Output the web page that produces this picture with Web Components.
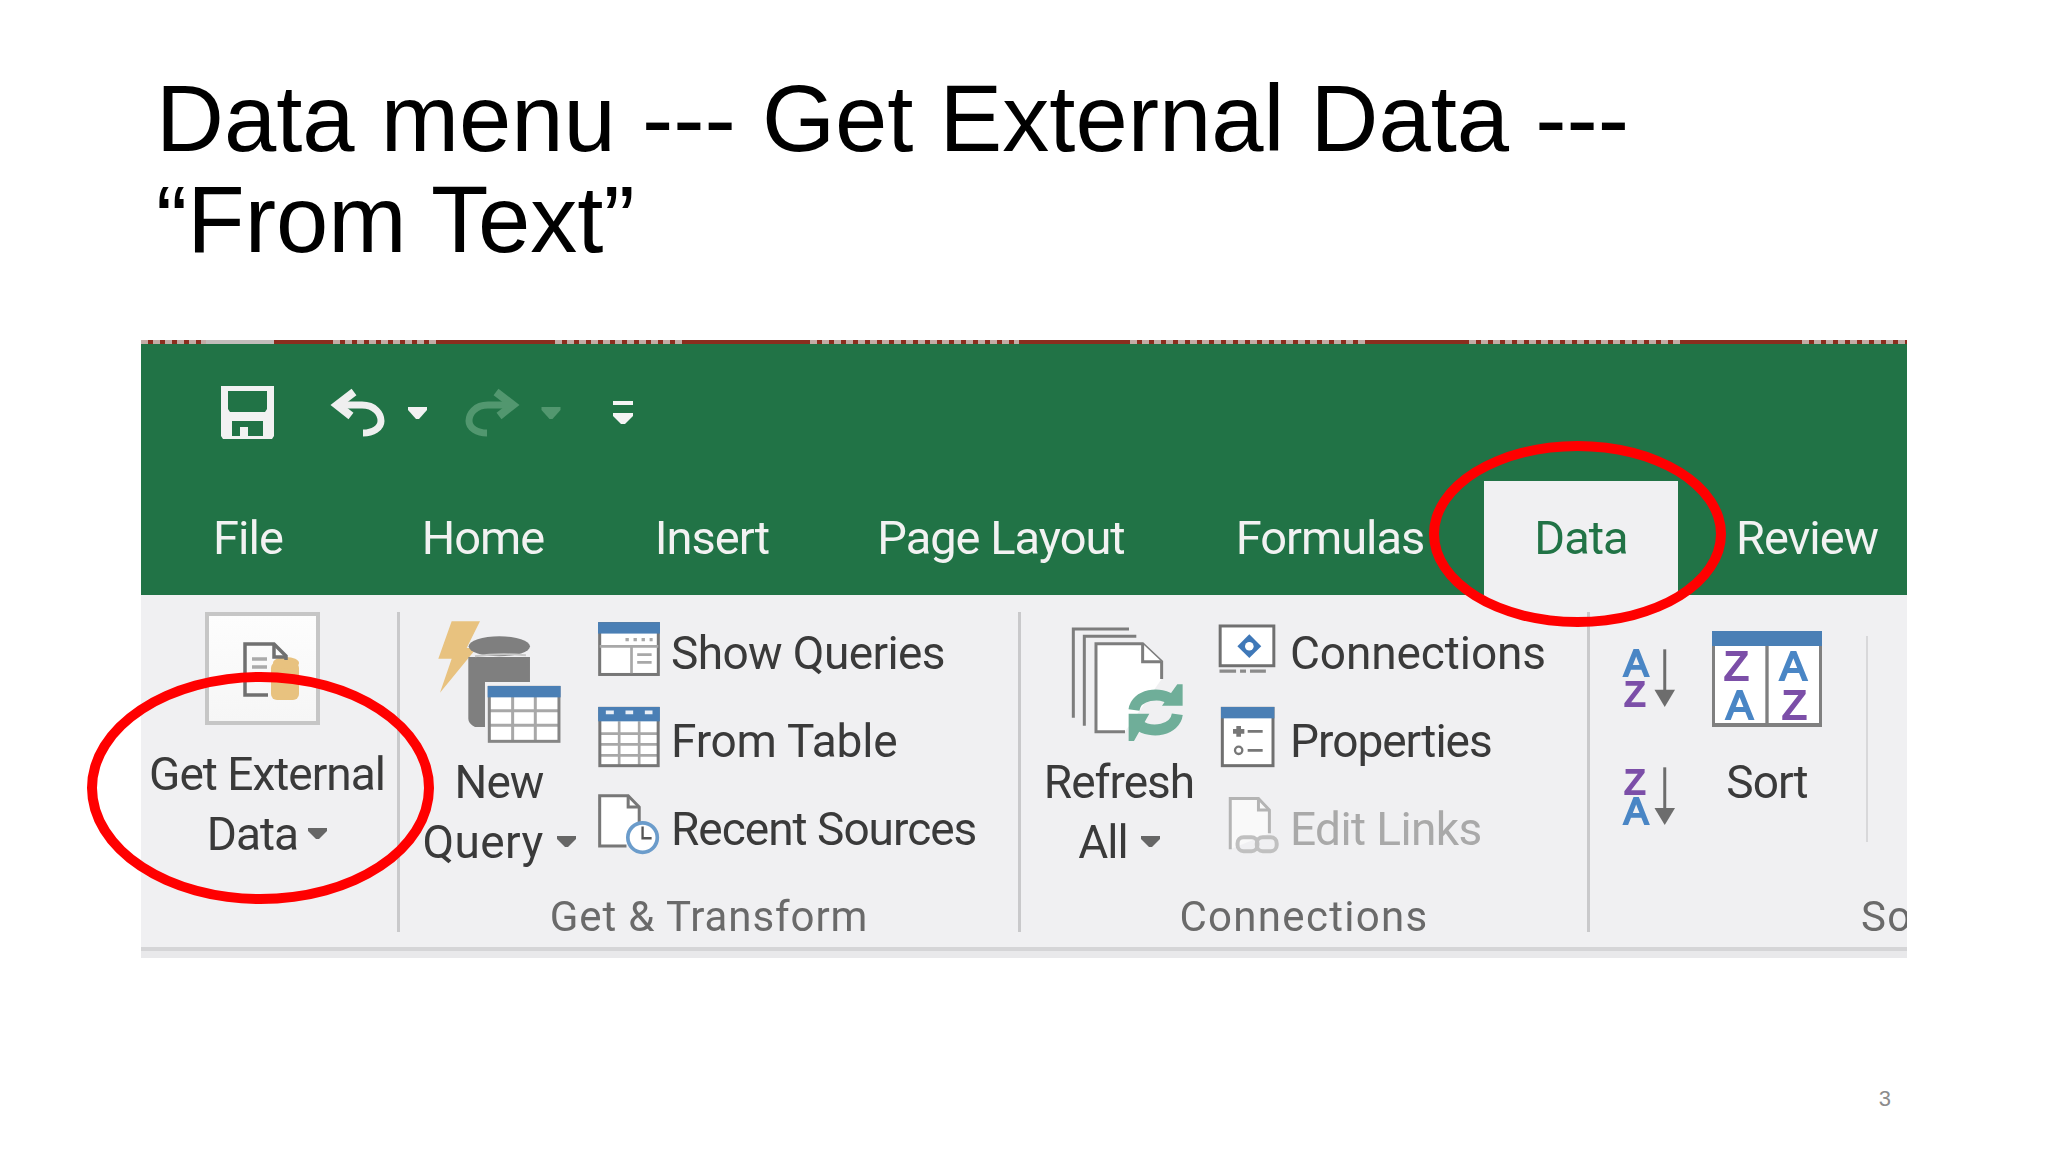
<!DOCTYPE html>
<html lang="en"><head><meta charset="utf-8"><title>Data menu</title>
<style>html,body{margin:0;padding:0;background:#fff;}</style></head>
<body>
<slide-page>
  <slide-title>Data menu --- Get External Data ---<br>“From Text”</slide-title>
  <excel-ribbon>
    <rb-band></rb-band>
    <rb-qat></rb-qat>
    <rb-tabs>
      <rb-tab style="--w:227px;--pr:13px">File</rb-tab>
      <rb-tab style="--w:230px">Home</rb-tab>
      <rb-tab style="--w:228px">Insert</rb-tab>
      <rb-tab style="--w:350px">Page Layout</rb-tab>
      <rb-tab style="--w:308px">Formulas</rb-tab>
      <rb-tab active style="--w:194px">Data</rb-tab>
      <rb-tab style="--w:229px;--pl:29px">Review</rb-tab>
    </rb-tabs>
    <rb-body>
      <rb-group style="--w:256px">
        <rb-big style="--bw:256px;--ih:132px;--tr:4px">
          <rb-launch slot="icon"></rb-launch>
          Get External<br>Data<rb-caret style="margin-left:10px"></rb-caret>
        </rb-big>
      </rb-group>
      <rb-sep></rb-sep>
      <rb-group style="--w:618px">
        <rb-big style="--bw:198px;--ih:140px;--it:-2px;--ir:5px">
          <rb-icon slot="icon" name="query"></rb-icon>
          New<br><span style="letter-spacing:.4px">Query</span><rb-caret></rb-caret>
        </rb-big>
        <rb-stack>
          <rb-cmd><rb-icon slot="icon" name="queries"></rb-icon>Show Queries</rb-cmd>
          <rb-cmd style="letter-spacing:-.2px"><rb-icon slot="icon" name="table"></rb-icon>From Table</rb-cmd>
          <rb-cmd style="letter-spacing:-1px"><rb-icon slot="icon" name="recent"></rb-icon>Recent Sources</rb-cmd>
        </rb-stack>
        <span slot="label" style="letter-spacing:.9px">Get &amp; Transform</span>
      </rb-group>
      <rb-sep></rb-sep>
      <rb-group style="--w:566px">
        <rb-big style="--bw:196px;--ih:140px;--it:3px;--il:5px">
          <rb-icon slot="icon" name="refresh"></rb-icon>
          Refresh<br>All<rb-caret></rb-caret>
        </rb-big>
        <rb-stack>
          <rb-cmd style="letter-spacing:-.1px"><rb-icon slot="icon" name="conn"></rb-icon>Connections</rb-cmd>
          <rb-cmd style="letter-spacing:-1px"><rb-icon slot="icon" name="props"></rb-icon>Properties</rb-cmd>
          <rb-cmd disabled><rb-icon slot="icon" name="links"></rb-icon>Edit Links</rb-cmd>
        </rb-stack>
        <span slot="label">Connections</span>
      </rb-group>
      <rb-sep></rb-sep>
      <rb-group style="--w:317px;--lp:271px;--la:left">
        <rb-sortcol>
          <rb-icon name="az"></rb-icon>
          <rb-icon name="za"></rb-icon>
        </rb-sortcol>
        <rb-big style="--bw:156px;--ih:140px;--it:19px">
          <rb-icon slot="icon" name="sort"></rb-icon>
          Sort
        </rb-big>
        <rb-sep thin></rb-sep>
        <span slot="label">So</span>
      </rb-group>
    </rb-body>
  </excel-ribbon>
  <slide-number>3</slide-number>
  <ring-mark style="--x:87px;--y:672px;--w:347px;--h:232px"></ring-mark>
  <ring-mark style="--x:1429px;--y:441px;--w:297px;--h:186px"></ring-mark>
</slide-page>
<script>
const UI='"Roboto","Noto Sans",sans-serif';
function def(name,css,html,init){
  customElements.define(name,class extends HTMLElement{
    constructor(){super();const r=this.attachShadow({mode:'open'});
      r.innerHTML='<style>'+css+'</style>'+html;}
    connectedCallback(){if(init)init(this);}
  });
}
const BLUE='#4a7fb5',G='#777',GL='#a8a8a8',Y='#e8c27f',PUR='#7c4fa8',AB='#4a86c5';
const AZ=(x,y,c,s,t)=>`<text x="${x}" y="${y}" fill="${c}" font-family="Liberation Sans" font-size="${s}" stroke="${c}" stroke-width="6">${t}</text>`;
const ICONS={
 save:{w:53,h:53,vb:'0 0 53 53',b:`<path fill="#f2f2f2" fill-rule="evenodd" d="M0 0H53V50L51 53H2L0 50ZM7 5V23L9 26H44L46 23V5ZM11 35V50H19V41H27V50H42V35Z"/>`},
 undo:{w:55,h:49,vb:'0 0 55 49',b:`<g fill="none" stroke="#efefef"><path stroke-width="8" d="M24 4 7 17 21 28"/><path stroke-width="7" d="M8 17H32C45 17 51 26 51 33 51 40 43 45 33 45"/></g>`},
 redo:{w:55,h:49,vb:'0 0 55 49',b:`<g fill="none" stroke="#52976f" transform="translate(55 0) scale(-1 1)"><path stroke-width="8" d="M24 4 7 17 21 28"/><path stroke-width="7" d="M8 17H32C45 17 51 26 51 33 51 40 43 45 33 45"/></g>`},
 caretw:{w:19,h:12,vb:'0 0 19 12',b:`<path fill="#f2f2f2" d="M0 0H19V3L11 12H8L0 3Z"/>`},
 caretd:{w:20,h:12,vb:'0 0 19 12',b:`<path fill="#52976f" d="M0 0H19V3L11 12H8L0 3Z"/>`},
 custom:{w:20,h:23,vb:'0 0 20 23',b:`<path fill="#f4f4f4" d="M0 0H20V4H0ZM0 12H20V15L12 23H8L0 15Z"/>`},
 query:{w:133.3,h:131.7,vb:'0 0 400 395',b:`
   <path fill="${Y}" d="M65 28H150L110 108H140L30 242 65 140H25Z"/>
   <path fill="#7f7f7f" d="M115 135H300V210H165V345H135Q115 335 115 320Z"/><ellipse cx="208" cy="103" rx="92" ry="30" fill="#7f7f7f"/>
   <path fill="none" stroke="#c8c8c8" stroke-width="6" d="M135 133Q208 122 288 130"/>
   <rect x="178" y="226" width="209" height="162" fill="#fff"/>
   <path fill="none" stroke="#a8a8a8" stroke-width="9" d="M248 255V388M316 255V388M178 296H387M178 340H387"/>
   <rect x="178" y="226" width="209" height="162" fill="none" stroke="#858585" stroke-width="9"/>
   <rect x="173" y="222" width="219" height="34" fill="${BLUE}"/>`},
 queries:{w:62,h:54,vb:'505 38 185 160',b:`
   <rect x="510" y="42" width="175" height="152" fill="#fff" stroke="${G}" stroke-width="9"/>
   <rect x="505" y="38" width="185" height="34" fill="${BLUE}"/>
   <path stroke="#a8a8a8" stroke-width="8" fill="none" d="M510 110H685M605 110V190M622 135H665M622 158H665"/>
   <path stroke="#a8a8a8" stroke-width="10" stroke-dasharray="10 14" fill="none" d="M587 90H668"/>`},
 table:{w:62,h:60,vb:'505 290 185 180',b:`
   <rect x="510" y="294" width="175" height="172" fill="#fff"/>
   <path stroke="#a8a8a8" stroke-width="8" fill="none" d="M568 333V466M628 333V466M510 370H685M510 402H685M510 435H685"/>
   <rect x="510" y="294" width="175" height="172" fill="none" stroke="${G}" stroke-width="9"/>
   <rect x="505" y="290" width="185" height="43" fill="${BLUE}"/>
   <path stroke="#e8eef6" stroke-width="11" fill="none" d="M528 306H552M587 306H610M645 306H668"/>`},
 recent:{w:62,h:62,vb:'505 553 185 185',b:`
   <path fill="#fff" stroke="${G}" stroke-width="9" d="M590 708H510V558H595L628 592V640"/>
   <path fill="none" stroke="${G}" stroke-width="9" d="M595 558V592H628"/>
   <circle cx="638" cy="683" r="44" fill="#fff" stroke="#6b9ccb" stroke-width="11"/>
   <path fill="none" stroke="#555" stroke-width="7" d="M638 650V685H665"/>`},
 refresh:{w:123.3,h:128.3,vb:'0 0 370 385',b:`
   <path fill="none" stroke="#7d7d7d" stroke-width="9" d="M40 308V42H207M73 332V64H229"/>
   <path fill="#fff" stroke="#7d7d7d" stroke-width="9" d="M195 350H108V86H248L305 140V192"/>
   <path fill="#fff" stroke="#7d7d7d" stroke-width="9" d="M248 86V140H305"/>
   <g fill="none" stroke="#6fae99" stroke-width="33">
     <path d="M222 285C228 240 300 225 340 258"/>
     <path d="M352 298C346 345 275 360 234 328"/></g>
   <path fill="#6fae99" d="M352 208H368V272H306ZM206 296H268L222 378H206Z"/>`},
 conn:{w:60,h:53,vb:'465 20 180 160',b:`
   <rect x="474" y="29" width="162" height="120" fill="#fff" stroke="#707070" stroke-width="9"/>
   <path fill="#3f78b8" d="M562 54 598 90 562 126 526 90Z"/><circle cx="562" cy="90" r="13" fill="#fff"/>
   <path fill="none" stroke="#8b8b8b" stroke-width="10" d="M472 165H522M534 165H552M564 165H612"/>`},
 props:{w:60,h:60,vb:'470 275 180 180',b:`
   <rect x="486" y="279" width="152" height="172" fill="#fff" stroke="#707070" stroke-width="9"/>
   <rect x="482" y="275" width="160" height="34" fill="${BLUE}"/>
   <path fill="none" stroke="#777" stroke-width="8" d="M562 348H607M562 405H607"/>
   <path fill="#777" d="M528 332H542V341H552V355H542V364H528V355H518V341H528Z"/>
   <circle cx="535" cy="405" r="11" fill="#fff" stroke="#777" stroke-width="7"/>`},
 links:{w:63,h:60,vb:'470 545 190 180',b:`
   <path fill="#f9f9f9" stroke="#b4b4b4" stroke-width="9" d="M510 708V555H595L628 590V660"/>
   <path fill="none" stroke="#b4b4b4" stroke-width="9" d="M595 555V590H628"/>
   <g fill="none" stroke="#c0c0c0" stroke-width="12"><rect x="532" y="672" width="60" height="42" rx="18"/><rect x="590" y="672" width="60" height="42" rx="18"/></g>`},
 az:{w:52,h:59,vb:'40 84 155 178',b:AZ(41,168,AB,112,'A')+AZ(43,258,PUR,105,'Z')+`
   <path fill="none" stroke="#6d6d6d" stroke-width="9" d="M165 88V225"/><path fill="#6d6d6d" d="M134 210H196L165 262Z"/>`},
 za:{w:52,h:59,vb:'40 438 155 178',b:AZ(43,522,PUR,105,'Z')+AZ(41,612,AB,112,'A')+`
   <path fill="none" stroke="#6d6d6d" stroke-width="9" d="M165 442V580"/><path fill="#6d6d6d" d="M134 565H196L165 616Z"/>`},
 sort:{w:110,h:96,vb:'310 30 330 288',b:`
   <rect x="310" y="30" width="330" height="288" fill="#808080"/>
   <rect x="319" y="70" width="151" height="236" fill="#fff"/><rect x="480" y="70" width="151" height="236" fill="#fff"/>
   <rect x="310" y="30" width="330" height="45" fill="${BLUE}"/>`
   +AZ(346,178,PUR,122,'Z')+AZ(352,295,AB,122,'A')+AZ(513,178,AB,122,'A')+AZ(520,295,PUR,122,'Z')},
};
def('rb-icon',':host{display:block;line-height:0}svg{display:block;overflow:visible}','<svg xmlns="http://www.w3.org/2000/svg"></svg>',el=>{
  const i=ICONS[el.getAttribute('name')],s=el.shadowRoot.querySelector('svg');
  s.setAttribute('width',i.w);s.setAttribute('height',i.h);s.setAttribute('viewBox',i.vb);s.innerHTML=i.b;
});
def('slide-page',':host{display:block;position:relative;width:2048px;height:1152px;overflow:hidden;background:#fff}','<slot></slot>');
def('slide-title',':host{display:block;padding:68px 0 0 156px;font:94px/101px "Liberation Sans",Arial,sans-serif;color:#000;white-space:nowrap}','<slot></slot>');
def('slide-number',`:host{display:block;padding:128px 157px 0 0;text-align:right;font:22px/26px "Liberation Sans",sans-serif;color:#8c8c8c}`,'<slot></slot>');
def('ring-mark',`:host{position:absolute;left:var(--x);top:var(--y);width:var(--w);height:var(--h);box-sizing:border-box;border:10px solid #f00;border-radius:50%;pointer-events:none}`,'');
def('excel-ribbon',`:host{display:block;margin:70px 0 0 141px;width:1766px;border-bottom:7px solid #e9e9eb;overflow:hidden;font:46px/60px ${UI};letter-spacing:-1px;color:#3a3a3a;filter:blur(.55px)}`,'<slot></slot>');
const RED='#8a2d1e',DOT='repeating-linear-gradient(90deg,#c4aca6 0 7px,'+RED+' 7px 12px)';
const SEG=[[65,DOT],[68,'#c2bdbb'],[59,RED],[104,DOT],[118,RED],[131,DOT],[124,RED],[209,DOT],[111,RED],[235,DOT],[104,RED],[216,DOT],[117,RED],[105,DOT]];
def('rb-band',':host{display:flex;height:4px}i{display:block;height:4px}',SEG.map(s=>`<i style="width:${s[0]}px;background:${s[1]}"></i>`).join(''));
def('rb-qat',`:host{display:flex;align-items:center;height:137px;background:#217346;padding-left:80px;box-sizing:border-box}
 .a{margin-left:56px}.b{margin-left:23px}.c{margin-left:38px}.d{margin-left:52px}.e{margin-left:21px}`,
 `<rb-icon name="save"></rb-icon><rb-icon class="a" name="undo"></rb-icon><rb-icon class="b" name="caretw"></rb-icon><rb-icon class="c" name="redo"></rb-icon><rb-icon class="e" name="caretd"></rb-icon><rb-icon class="d" name="custom"></rb-icon>`);
def('rb-tabs',':host{display:flex;height:114px;background:#217346}','<slot></slot>');
def('rb-tab',`:host{display:block;box-sizing:border-box;width:var(--w);height:114px;padding:27px var(--pr,0) 0 var(--pl,0);text-align:center;font-size:47px;color:#f2f2f2;white-space:nowrap}
 :host([active]){background:#f0f0f2;color:#217346}`,'<slot></slot>');
def('rb-body',`:host{display:flex;box-sizing:content-box;height:335px;padding-top:17px;background:#f0f0f2;border-bottom:4px solid #d5d5d7}`,'<slot></slot>');
def('rb-group',`:host{display:flex;flex-direction:column;width:var(--w);height:335px;flex:none;overflow:hidden}
 .c{display:flex;flex:1;align-items:flex-start}
 .l{height:44px;margin-bottom:8px;font-size:42px;line-height:44px;letter-spacing:1.3px;color:#6a6a6a;white-space:nowrap;text-align:var(--la,center);padding-left:var(--lp,0)}`,
 '<div class="c"><slot></slot></div><div class="l"><slot name="label"></slot></div>');
def('rb-sep',`:host{display:block;flex:none;width:3px;height:320px;background:#c9c9cb}
 :host([thin]){width:2px;height:206px;margin:24px 0 0 21px;background:#d8d8da}`,'');
def('rb-big',`:host{display:block;flex:none;width:var(--bw)}
 .i{display:flex;justify-content:center;align-items:flex-start;height:var(--ih);box-sizing:border-box;padding-top:var(--it,0);padding-left:var(--il,0);padding-right:var(--ir,0)}
 .t{text-align:center;white-space:nowrap;padding-right:var(--tr,0)}`,'<div class="i"><slot name="icon"></slot></div><div class="t"><slot></slot></div>');
def('rb-launch',`:host{display:block;box-sizing:border-box;width:115px;height:113px;margin-right:13px;border:4px solid #c6c6c6;background:linear-gradient(#fdfdfd,#f6f6f6)}svg{display:block}`,
 `<svg width="107" height="105" viewBox="0 0 107 105">
  <rect x="62" y="46" width="28" height="38" rx="6" fill="${Y}"/><ellipse cx="77" cy="47" rx="13" ry="6" fill="${Y}"/>
  <path fill="none" stroke="#707070" stroke-width="3.5" d="M59 79H36V28H65L77 40V44"/>
  <path fill="none" stroke="#707070" stroke-width="3.5" d="M65 28V41H77"/>
  <path fill="none" stroke="#aaa" stroke-width="3.5" d="M43 43H58M43 51H58"/></svg>`);
def('rb-caret',`:host{display:inline-block;width:19px;height:11px;margin-left:13px;vertical-align:11px}svg{display:block}`,
 `<svg width="19" height="11" viewBox="0 0 19 11"><path fill="#666" d="M0 0H19V3L11 11H8L0 3Z"/></svg>`);
def('rb-stack',`:host{display:flex;flex-direction:column;gap:28px;padding-top:7px;flex:none}`,'<slot></slot>');
def('rb-cmd',`:host{display:flex;align-items:center;height:60px;white-space:nowrap;letter-spacing:-.6px}
 .i{width:62px;flex:none;display:flex;justify-content:flex-start}
 .t{margin-left:11px;padding-top:8px}
 :host([disabled]) .t{color:#a9a9a9}`,'<div class="i"><slot name="icon"></slot></div><div class="t"><slot></slot></div>');
def('rb-sortcol',`:host{display:flex;flex-direction:column;gap:59px;flex:none;padding:36px 14px 0 33px}`,'<slot></slot>');
</script>
</body></html>
